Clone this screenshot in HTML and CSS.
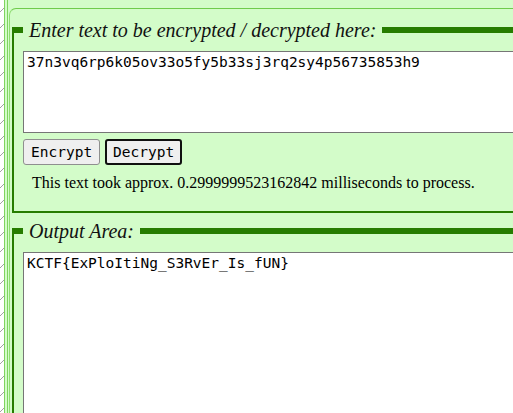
FILE: index.html
```html
<!DOCTYPE html>
<html>
<head>
<meta charset="utf-8">
<title>Encrypt / Decrypt</title>
<link rel="stylesheet" href="styles.css">
</head>
<body>
<div class="page">
  <svg class="hatch" width="4" height="413" aria-hidden="true">
    <defs>
      <pattern id="h" width="4" height="16" patternUnits="userSpaceOnUse">
        <line x1="0" y1="12" x2="4" y2="8" stroke="#8a8a8a" stroke-width="0.8"/>
      </pattern>
    </defs>
    <rect width="4" height="413" fill="#ffffff"/>
    <rect width="4" height="413" fill="url(#h)"/>
  </svg>
  <div class="frame">
    <div class="rail">
      <div class="panel">
        <fieldset class="box">
          <legend>Enter text to be encrypted / decrypted here:</legend>
          <textarea class="area input-area">37n3vq6rp6k05ov33o5fy5b33sj3rq2sy4p56735853h9</textarea>
          <div class="actions">
            <button class="btn">Encrypt</button>
            <button class="btn focused">Decrypt</button>
          </div>
          <p class="note">This text took approx. 0.2999999523162842 milliseconds to process.</p>
        </fieldset>
        <fieldset class="box output">
          <legend>Output Area:</legend>
          <textarea class="area output-area">KCTF{ExPloItiNg_S3RvEr_Is_fUN}</textarea>
        </fieldset>
      </div>
    </div>
  </div>
</div>
</body>
</html>
```
FILE: styles.css
```css
html, body {
  margin: 0;
  padding: 0;
  background: #ffffff;
  overflow: hidden;
}

.page {
  display: flex;
  width: 513px;
  height: 413px;
  overflow: hidden;
}

.hatch {
  flex: 0 0 4px;
  display: block;
}

.frame {
  flex: 0 0 auto;
  width: 700px;
  background: #d3fcc9;
  border-left: 1px solid #7fd45e;
  padding-left: 2px;
}

.rail {
  height: 100%;
  border-left: 1px solid #7fd45e;
  padding-left: 1px;
  padding-top: 8px;
  box-sizing: border-box;
}

.panel {
  height: 100%;
  border-top: 1px solid #6fcb4c;
  border-left: 1px solid #8fdc70;
  border-top-left-radius: 7px;
  padding: 9px 0 0 2px;
  box-sizing: border-box;
  background: #d3fcc9;
}

.box {
  margin: 0;
  border: none;
  border-top: 6px solid #267c00;
  border-left: 2px solid #267c00;
  border-bottom: 2px solid #267c00;
  padding: 9px 0 19px 9px;
  width: 600px;
  box-sizing: border-box;
}

.box legend {
  padding: 0 6px;
  margin-left: 0;
  font-family: "Liberation Serif", "Times New Roman", serif;
  font-style: italic;
  font-size: 20px;
  line-height: 24px;
  color: #111111;
}

.output {
  margin-top: 6px;
  border-bottom: none;
  height: 300px;
}

.area {
  display: block;
  width: 560px;
  box-sizing: border-box;
  border: 1px solid #767676;
  background: #ffffff;
  padding: 2px 3px;
  margin: 0;
  resize: none;
  font-family: "DejaVu Sans Mono", monospace;
  font-size: 14.5px;
  line-height: 17px;
  color: #000000;
}

.input-area {
  height: 82px;
}

.output-area {
  height: 200px;
}

.actions {
  display: flex;
  gap: 5px;
  margin-top: 6px;
}

.btn {
  height: 26px;
  padding: 0 7px;
  font-family: "DejaVu Sans Mono", monospace;
  font-size: 14.5px;
  color: #000000;
  background: #efefef;
  border: 1px solid #8f8f8f;
  border-radius: 3px;
  box-sizing: border-box;
}

.btn.focused {
  border: 2px solid #101010;
  padding: 0 6px;
}

.note {
  margin: 9px 0 0 9px;
  font-family: "Liberation Serif", "Times New Roman", serif;
  font-size: 16px;
  line-height: 18px;
  color: #000000;
}
```
